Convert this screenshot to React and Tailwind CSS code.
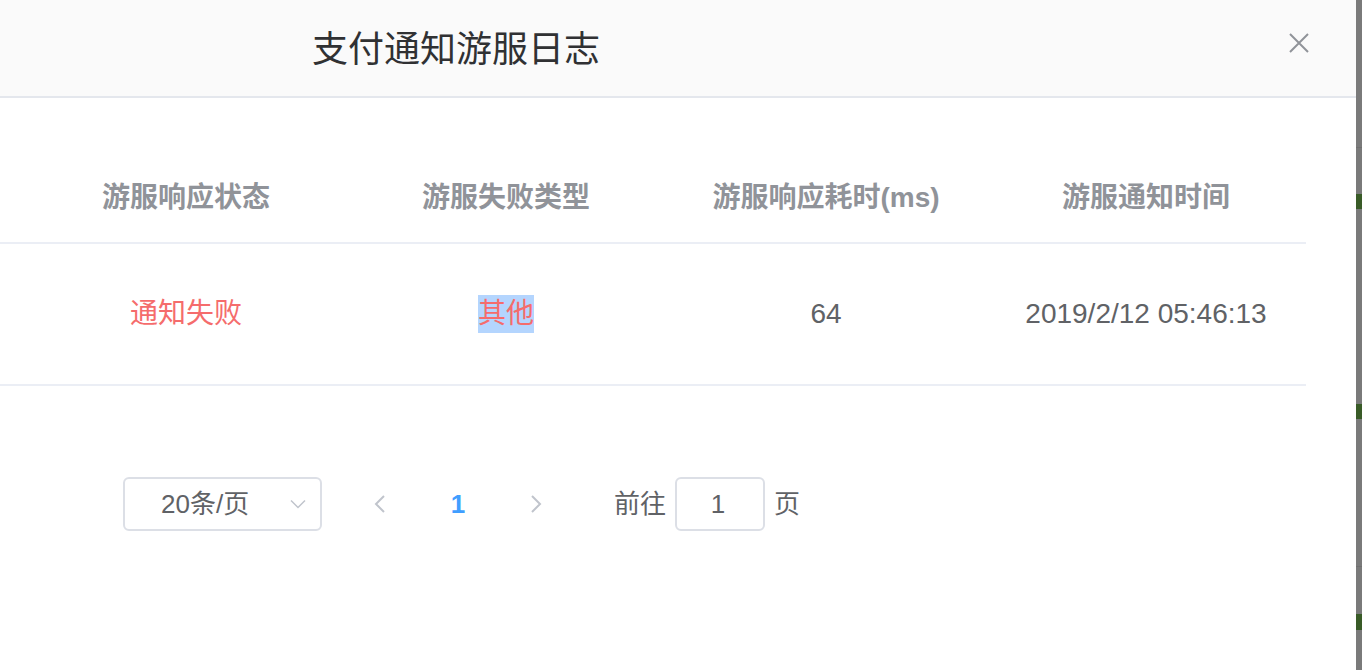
import React from 'react';

const font = { fontFamily: '"Liberation Sans", "Noto Sans CJK SC", sans-serif' };

const columns = ['游服响应状态', '游服失败类型', '游服响应耗时(ms)', '游服通知时间'];

const CloseIcon = () => (
  <svg width="22" height="22" viewBox="0 0 22 22" fill="none" stroke="#909399" strokeWidth="2">
    <path d="M2 2L20 20M20 2L2 20" />
  </svg>
);

const ChevronDown = () => (
  <svg width="16" height="10" viewBox="0 0 16 10" fill="none" stroke="#c0c4cc" strokeWidth="1.5">
    <path d="M1 1.5L8 8.5L15 1.5" />
  </svg>
);

const Arrow = ({ dir }) => (
  <svg width="12" height="20" viewBox="0 0 12 20" fill="none" stroke="#c0c4cc" strokeWidth="2">
    {dir === 'left' ? <path d="M10 2L2 10L10 18" /> : <path d="M2 2L10 10L2 18" />}
  </svg>
);

const SideStrip = () => (
  <div className="w-[6px] h-full bg-[#7a7a7a] flex flex-col">
    <div className="h-[147px] shrink-0" />
    <div className="h-px shrink-0 bg-[#707070]" />
    <div className="h-[46px] shrink-0" />
    <div className="h-[15px] shrink-0 bg-[#395b27]" />
    <div className="h-[195px] shrink-0" />
    <div className="h-[15px] shrink-0 bg-[#395b27]" />
    <div className="h-[147px] shrink-0" />
    <div className="h-px shrink-0 bg-[#707070]" />
    <div className="h-[47px] shrink-0" />
    <div className="h-[16px] shrink-0 bg-[#395b27]" />
  </div>
);

export default function App() {
  return (
    <div className="w-[1362px] h-[670px] flex overflow-hidden bg-white" style={font}>
      <div className="w-[1356px] h-full flex flex-col bg-white">
        <div className="h-[98px] shrink-0 bg-[#fafafa] border-b-2 border-[#e4e7ed] flex items-center">
          <h2 className="pl-[312px] pt-[4px] text-[36px] text-[#303133] font-normal leading-none">支付通知游服日志</h2>
          <button className="ml-auto mr-[46px] mb-[10px]">
            <CloseIcon />
          </button>
        </div>

        <div className="mt-[52px] w-[1306px]">
          <div className="h-[94px] border-b-2 border-[#ebeef5] pl-[26px] grid grid-cols-[repeat(4,320px)] items-center">
            {columns.map(c => (
              <div key={c} className="text-center text-[28px] font-bold text-[#909399] pt-[4px]">{c}</div>
            ))}
          </div>
          <div className="h-[142px] border-b-2 border-[#ebeef5] pl-[26px] grid grid-cols-[repeat(4,320px)] items-center text-[28px]">
            <div className="text-center text-[#f56c6c]">通知失败</div>
            <div className="text-center">
              <span className="inline-block bg-[#b4d5fe] text-[#f56c6c] leading-[38px]">其他</span>
            </div>
            <div className="text-center text-[#606266]">64</div>
            <div className="text-center text-[#606266]">2019/2/12 05:46:13</div>
          </div>
        </div>

        <div className="mt-[91px] pl-[123px] flex items-center h-[54px] text-[26px] text-[#606266]">
          <div className="w-[199px] h-[54px] border-2 border-[#dcdfe6] rounded-[6px] flex items-center pl-[36px] pr-[14px]">
            <span>20条/页</span>
            <span className="ml-auto flex items-center"><ChevronDown /></span>
          </div>
          <div className="ml-[19px] w-[78px] flex justify-center"><Arrow dir="left" /></div>
          <div className="w-[78px] text-center font-bold text-[#409eff]">1</div>
          <div className="w-[78px] flex justify-center"><Arrow dir="right" /></div>
          <span className="ml-[39px]">前往</span>
          <div className="ml-[9px] w-[90px] h-[54px] border-2 border-[#dcdfe6] rounded-[6px] flex items-center justify-center pr-[4px]">1</div>
          <span className="ml-[9px]">页</span>
        </div>
      </div>
      <SideStrip />
    </div>
  );
}
